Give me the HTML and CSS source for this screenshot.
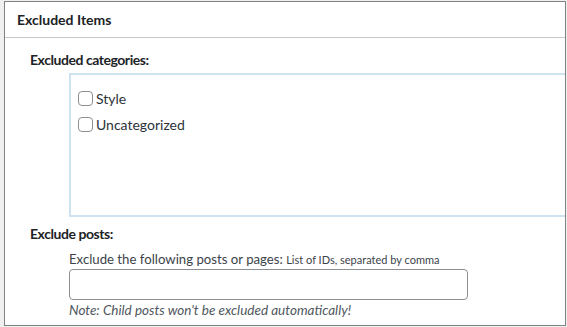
FILE: index.html
```html
<!DOCTYPE html>
<html lang="en">
<head>
  <meta charset="UTF-8">
  <title>Excluded Items</title>
  <link rel="stylesheet" href="styles.css">
</head>
<body>

<div class="panel">
  <h2 class="panel-head">Excluded Items</h2>

  <div class="inside">
    <h4 class="field-title">Excluded categories:</h4>
    <div class="cat-box">
      <label class="cat-row"><input type="checkbox"> Style</label>
      <label class="cat-row"><input type="checkbox"> Uncategorized</label>
    </div>

    <h4 class="field-title posts-title">Exclude posts:</h4>
    <div class="posts-field">
      <label for="excludePosts">Exclude the following posts or pages: <small>List of IDs, separated by comma</small></label>
      <input type="text" id="excludePosts">
      <p class="note">Note: Child posts won't be excluded automatically!</p>
    </div>
  </div>
</div>

</body>
</html>
```

FILE: styles.css
```css
body {
  margin: 0;
  padding: 1px 0 0 4px;
  background-color: #f0f0f1;
  font-family: "Segoe UI", Lato, "Open Sans", sans-serif;
  font-size: 13px;
  color: #3c434a;
}
.panel {
  width: 560px;
  height: 323px;
  background: #fff;
  border: 1px solid #828282;
  overflow: hidden;
}
.panel-head {
  margin: 0;
  height: 35px;
  line-height: 35px;
  padding-left: 12px;
  font-size: 14px;
  font-weight: 700;
  color: #1d2327;
  border-bottom: 1px solid #c8c8c8;
}
.inside {
  padding-left: 25px;
}
.field-title {
  margin: 12px 0 3px;
  line-height: 20px;
  font-size: 14px;
  font-weight: 700;
  letter-spacing: -0.45px;
  color: #1d2327;
}
.cat-box {
  margin-left: 39px;
  width: 540px;
  height: 116px;
  padding: 10px 7px 14px;
  border: 2px solid #cfe2ef;
}
.cat-row {
  display: flex;
  align-items: center;
  gap: 3px;
  height: 26px;
  font-size: 14px;
  color: #2c3338;
}
.cat-row input {
  appearance: none;
  width: 15px;
  height: 15px;
  margin: 0;
  border: 1px solid #8c8f94;
  border-radius: 4px;
  background: #fff;
}
.posts-title {
  margin-top: 7px;
}
.posts-field {
  margin-left: 39px;
  padding-top: 4px;
}
.posts-field label {
  display: block;
  line-height: 16px;
  margin-bottom: 1px;
  font-size: 13.2px;
}
.posts-field small {
  font-size: 11px;
}
.posts-field input {
  display: block;
  box-sizing: border-box;
  width: 399px;
  height: 31px;
  margin: 0;
  border: 1px solid #8c8f94;
  border-radius: 4px;
}
.note {
  margin: 2px 0 0;
  font-size: 13.5px;
  font-style: italic;
  color: #50575e;
}
```
